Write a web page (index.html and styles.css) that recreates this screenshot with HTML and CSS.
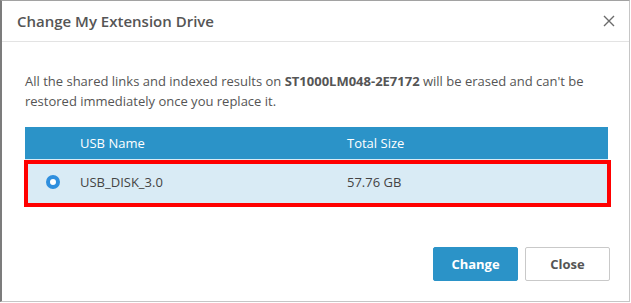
FILE: index.html
```html
<!DOCTYPE html>
<html lang="en">
<head>
    <meta charset="UTF-8">
    <meta name="viewport" content="width=device-width, initial-scale=1.0">
    <title>Change My Extension Drive</title>
    <link rel="stylesheet" href="styles.css">
</head>
<body>

<div class="dialog">
    <div class="dialog-header">
        <h2>Change My Extension Drive</h2>
        <button type="button" class="close-x" aria-label="Close">
            <svg width="12" height="12" viewBox="0 0 12 12">
                <path d="M1 1 L11 11 M11 1 L1 11" stroke="#6b6b6b" stroke-width="1.4" fill="none"/>
            </svg>
        </button>
    </div>

    <div class="dialog-body">
        <p>All the shared links and indexed results on <strong>ST1000LM048-2E7172</strong> will be erased and can't be restored immediately once you replace it.</p>

        <div class="usb-table">
            <div class="usb-row head">
                <span class="col-radio"></span>
                <span class="col-name">USB Name</span>
                <span class="col-size">Total Size</span>
            </div>
            <div class="usb-row selected">
                <span class="col-radio"><span class="radio"></span></span>
                <span class="col-name">USB_DISK_3.0</span>
                <span class="col-size">57.76 GB</span>
            </div>
        </div>
    </div>

    <div class="dialog-footer">
        <button type="button" class="btn primary">Change</button>
        <button type="button" class="btn">Close</button>
    </div>
</div>

</body>
</html>
```

FILE: styles.css
```css
body {
    margin: 0;
    background: #ffffff;
    font-family: "Open Sans", Arial, sans-serif;
    color: #555555;
}
.dialog {
    box-sizing: border-box;
    width: 630px;
    height: 302px;
    border-left: 2px solid #7c7c7c;
    border-top: 1px solid #a2a2a2;
    border-right: 1px solid #c6c6c6;
    border-bottom: 1px solid #c6c6c6;
    display: flex;
    flex-direction: column;
}
.dialog-header {
    height: 40px;
    border-bottom: 1px solid #e3e3e3;
    display: flex;
    align-items: center;
    justify-content: space-between;
    padding: 0 14px 0 15px;
}
.dialog-header h2 {
    margin: 0;
    font-size: 15px;
    font-weight: 600;
    color: #555555;
}
.close-x {
    border: none;
    background: none;
    padding: 0;
    width: 12px;
    height: 12px;
    cursor: pointer;
}
.dialog-body {
    padding: 29px 21px 0 23px;
    flex: 1;
}
.dialog-body p {
    margin: 0;
    font-size: 13px;
    line-height: 20px;
}
.dialog-body strong {
    font-weight: 700;
}
.usb-table {
    margin-top: 16px;
    font-size: 13px;
}
.usb-row {
    display: flex;
    align-items: center;
}
.usb-row.head {
    height: 32px;
    background: #2b93c8;
    color: #ffffff;
}
.usb-row.selected {
    position: relative;
    height: 45px;
    background: #d9ebf5;
    color: #444444;
}
/* red highlight drawn over the selected row */
.usb-row.selected::after {
    content: "";
    position: absolute;
    top: 1px;
    left: -1px;
    right: -3px;
    bottom: -3px;
    border: 4px solid #ff0000;
}
.col-radio {
    width: 55px;
    display: flex;
    justify-content: center;
}
.col-name {
    width: 267px;
}
.radio {
    box-sizing: border-box;
    width: 14px;
    height: 14px;
    border-radius: 50%;
    border: 4px solid #2f8fde;
    background: #ffffff;
}
.dialog-footer {
    display: flex;
    justify-content: flex-end;
    gap: 7px;
    padding: 0 19px 20px 0;
}
.btn {
    width: 85px;
    height: 34px;
    border: 1px solid #c9c9c9;
    border-radius: 2px;
    background: #ffffff;
    color: #555555;
    font-family: "Open Sans", Arial, sans-serif;
    font-size: 13px;
    font-weight: 700;
    cursor: pointer;
}
.btn.primary {
    background: #2b93c8;
    border-color: #2b93c8;
    color: #ffffff;
}
```
